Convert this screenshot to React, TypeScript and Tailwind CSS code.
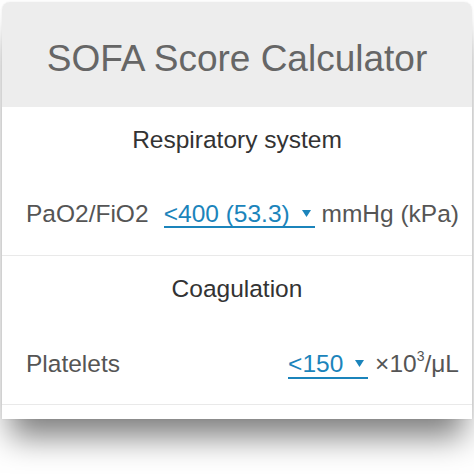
const font = { fontFamily: '"Liberation Sans", Arial, sans-serif' };

function Select({ value }: { value: string }) {
  return (
    <span className="inline-block leading-none border-b-2 border-[#1b84bb] text-[#1b84bb]">
      {value}
      <svg className="inline-block ml-[12px] mr-[4px] align-[5px]" width="9" height="7" viewBox="0 0 9 7" fill="currentColor">
        <path d="M0 0H9L4.5 7Z" />
      </svg>
    </span>
  );
}

function Section({ title, children }: { title: string; children: React.ReactNode }) {
  return (
    <section className="bg-white border-b border-[#e9e9e9] shadow-[0_1px_2px_rgba(0,0,0,0.04)]">
      <div className="h-[66px] flex items-center justify-center text-[24.5px] text-[#333]">{title}</div>
      <div className="h-[82px] flex items-center justify-between pl-[24px] pr-[13px] text-[24.5px] text-[#555] whitespace-nowrap">
        {children}
      </div>
    </section>
  );
}

export default function App() {
  return (
    <div className="bg-white w-[474px] h-[474px] overflow-hidden p-[2px]" style={font}>
      <div className="rounded-t-[8px] shadow-[0_26px_30px_-8px_rgba(0,0,0,0.5),0_0_2px_rgba(0,0,0,0.08)] bg-white">
        <header className="h-[105px] rounded-t-[8px] bg-[#ededed] flex items-center justify-center pt-[8px]">
          <h1 className="text-[37px] text-[#666] leading-none">SOFA Score Calculator</h1>
        </header>

        <Section title="Respiratory system">
          <span>PaO2/FiO2</span>
          <span>
            <Select value="<400 (53.3)" /> mmHg (kPa)
          </span>
        </Section>

        <Section title="Coagulation">
          <span className="pt-[3px]">Platelets</span>
          <span className="pt-[3px]">
            <Select value="<150" /> ×10<sup className="text-[14px] top-[-0.8em]">3</sup>/μL
          </span>
        </Section>

        <div className="h-[14px] bg-white" />
      </div>
    </div>
  );
}
